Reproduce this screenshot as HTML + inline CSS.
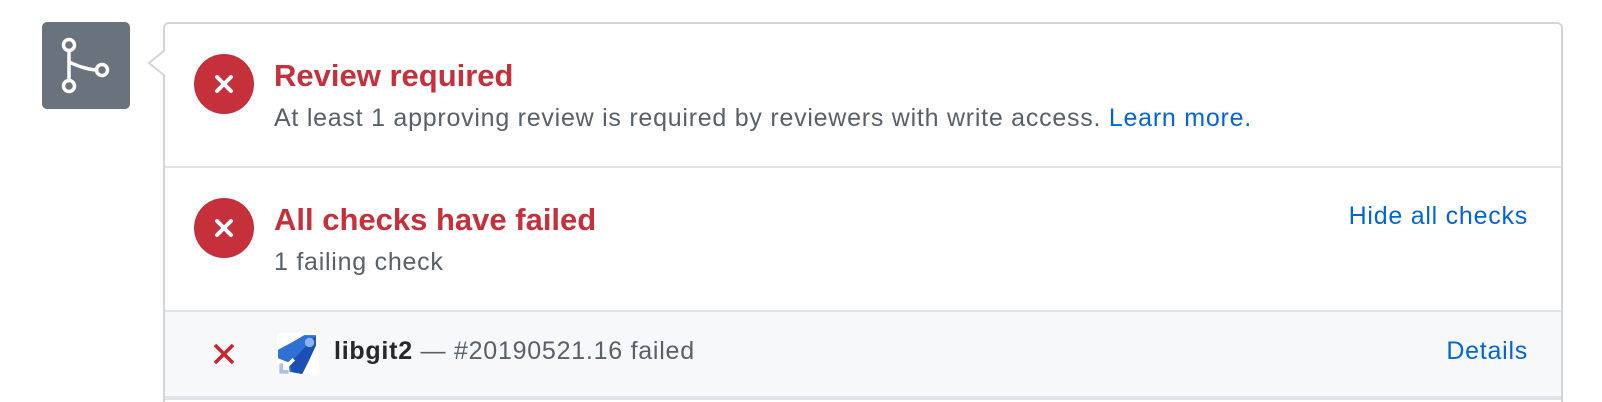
<!DOCTYPE html>
<html style="width:1602px;height:402px;overflow:hidden"><head><meta charset="utf-8"><style>
*{margin:0;padding:0;box-sizing:border-box}
body{width:1602px;height:402px;background:#fff;font-family:"Liberation Sans",Arial,sans-serif;position:relative;overflow:hidden}
.abs{position:absolute}
.ibox{left:42px;top:22px;width:88px;height:87px;background:#6a737d;border-radius:5px}
.box{left:163px;top:22px;width:1400px;height:400px;border:2px solid #d1d5da;border-radius:6px;overflow:hidden}
.circ{width:60px;height:60px;border-radius:50%;background:#c5303a}
.t{color:#c5303a;font-weight:bold;font-size:31px;white-space:nowrap}
.s{color:#586069;font-size:25px;letter-spacing:0.75px;white-space:nowrap}
a{color:#0366d6;text-decoration:none}
</style></head><body>
<div class="abs ibox">
<svg width="88" height="87" viewBox="0 0 88 87" style="position:absolute;left:0;top:0">
<g fill="none" stroke="#fff" stroke-width="3.5" stroke-linecap="round">
<circle cx="27" cy="23" r="5.5"/><circle cx="27" cy="64" r="5.5"/><circle cx="60" cy="48" r="5.5"/>
<path d="M27 28.5V58.5"/><path d="M27 40C34 43 42 47 54.5 48"/>
</g></svg>
</div>
<div class="abs box">
 <div class="abs" style="left:0;top:142px;width:100%;height:2px;background:#e1e4e8"></div>
 <div class="abs" style="left:0;top:286px;width:100%;height:90px;background:#f6f8fa;border-top:2px solid #e1e4e8;border-bottom:4px solid #e1e4e8"></div>
</div>
<svg class="abs" style="left:147px;top:50px" width="20" height="26" viewBox="0 0 20 26"><path d="M18 0L2 13L18 26Z" fill="#fff"/><path d="M18 0L2 13L18 26" fill="none" stroke="#d1d5da" stroke-width="2"/></svg>

<div class="abs circ" style="left:194px;top:54px"></div>
<svg class="abs" style="left:194px;top:54px" width="60" height="60"><path d="M23 23L37 37M37 23L23 37" stroke="#fff" stroke-width="4" stroke-linecap="round"/></svg>
<div class="abs t" style="left:274px;top:58px">Review required</div>
<div class="abs s" style="left:274px;top:104px">At least 1 approving review is required by reviewers with write access. <a>Learn more.</a></div>

<div class="abs circ" style="left:194px;top:198px"></div>
<svg class="abs" style="left:194px;top:198px" width="60" height="60"><path d="M23 23L37 37M37 23L23 37" stroke="#fff" stroke-width="4" stroke-linecap="round"/></svg>
<div class="abs t" style="left:274px;top:202px">All checks have failed</div>
<div class="abs s" style="left:274px;top:248px">1 failing check</div>
<div class="abs s" style="right:74px;top:202px"><a>Hide all checks</a></div>

<svg class="abs" style="left:213px;top:343px" width="22" height="22"><path d="M2 2L20 20M20 2L2 20" stroke="#cb2431" stroke-width="3.5"/></svg>
<svg class="abs" style="left:277px;top:333px" width="42" height="42" viewBox="0 0 40 40">
<rect width="40" height="40" rx="4" fill="#fff"/>
<path d="M1 16L14 9L26 2H37V12L30 27L24 39L12 37L11 28L1 24Z" fill="#2f6fd6"/>
<path d="M12 29L28 12L37 3V12L30 27L24 39L14 37Z" fill="#1b4fb3"/>
<circle cx="31" cy="9" r="4.5" fill="#8fb0ec"/>
<path d="M4 29V37H11" stroke="#a9c0ee" stroke-width="3.5" fill="none"/>
<path d="M9 32L16 25" stroke="#fff" stroke-width="3.5"/>
</svg>
<div class="abs s" style="left:334px;top:337px"><b style="color:#24292e">libgit2</b> — #20190521.16 failed</div>
<div class="abs s" style="right:74px;top:337px"><a>Details</a></div>
</body></html>
